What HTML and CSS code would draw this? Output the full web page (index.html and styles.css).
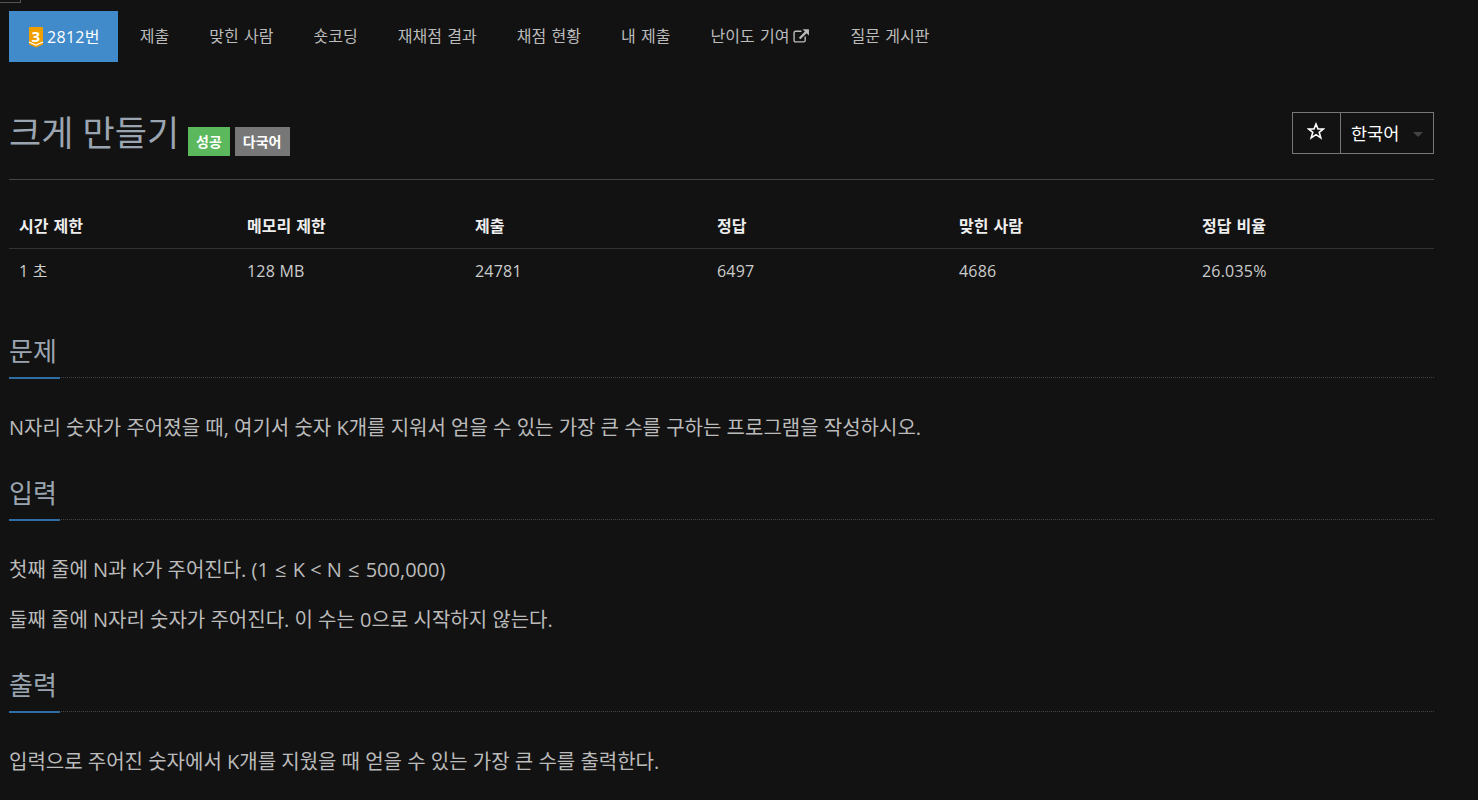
FILE: index.html
```html
<!DOCTYPE html>
<html lang="ko">
<head>
  <meta charset="UTF-8">
  <meta name="viewport" content="width=device-width, initial-scale=1.0">
  <title>2812번: 크게 만들기</title>
  <link rel="stylesheet" href="styles.css">
</head>
<body>
  <div class="corner"></div>

  <ul class="tabs">
    <li class="active">
      <svg class="tier" width="16" height="24" viewBox="0 0 16 24">
        <path d="M1 2H15V19.500L8 22.500L1 19.500Z" fill="#f09e00"/>
        <path d="M1 17L8 20L15 17" fill="none" stroke="#fff" stroke-width="1.200"/>
        <text x="8" y="16.500" text-anchor="middle" class="tier-num">3</text>
      </svg>
      <a href="#">2812번</a>
    </li>
    <li><a href="#">제출</a></li>
    <li><a href="#">맞힌 사람</a></li>
    <li><a href="#">숏코딩</a></li>
    <li><a href="#">재채점 결과</a></li>
    <li><a href="#">채점 현황</a></li>
    <li><a href="#">내 제출</a></li>
    <li>
      <a href="#">난이도 기여</a>
      <svg class="ext" width="17" height="15" viewBox="0 0 16 14">
        <path d="M11.500 8V11.500Q11.500 13 10 13H2.500Q1 13 1 11.500V4.500Q1 3 2.500 3H8" fill="none" stroke="currentColor" stroke-width="1.300"/>
        <path d="M5.500 9L12 2.500M9 1H15V7L12.800 4.800L7 10.500L5.500 9L11.200 3.200Z" fill="currentColor"/>
      </svg>
    </li>
    <li><a href="#">질문 게시판</a></li>
  </ul>

  <div class="title-row">
    <div class="title-left">
      <h1>크게 만들기</h1>
      <span class="label green">성공</span>
      <span class="label gray">다국어</span>
    </div>
    <div class="title-right">
      <span class="star-btn">
        <svg width="18" height="18" viewBox="0 0 18 18">
          <path d="M9 2L11 7H16.500L12.200 10.300L13.800 15.800L9 12.600L4.200 15.800L5.800 10.300L1.500 7H7Z" fill="none" stroke="currentColor" stroke-width="1.600"/>
        </svg>
      </span>
      <span class="lang-btn">한국어<i class="caret"></i></span>
    </div>
  </div>

  <table class="info">
    <thead>
      <tr>
        <th class="c1">시간 제한</th>
        <th class="c2">메모리 제한</th>
        <th class="c3">제출</th>
        <th class="c4">정답</th>
        <th class="c5">맞힌 사람</th>
        <th>정답 비율</th>
      </tr>
    </thead>
    <tbody>
      <tr>
        <td>1 초</td>
        <td>128 MB</td>
        <td>24781</td>
        <td>6497</td>
        <td>4686</td>
        <td>26.035%</td>
      </tr>
    </tbody>
  </table>

  <section>
    <div class="headline"><h2>문제</h2></div>
    <p>N자리 숫자가 주어졌을 때, 여기서 숫자 K개를 지워서 얻을 수 있는 가장 큰 수를 구하는 프로그램을 작성하시오.</p>
  </section>

  <section>
    <div class="headline"><h2>입력</h2></div>
    <p>첫째 줄에 N과 K가 주어진다. (1 <span class="le">≤</span> K &lt; N <span class="le">≤</span> 500,000)</p>
    <p>둘째 줄에 N자리 숫자가 주어진다. 이 수는 0으로 시작하지 않는다.</p>
  </section>

  <section>
    <div class="headline"><h2>출력</h2></div>
    <p>입력으로 주어진 숫자에서 K개를 지웠을 때 얻을 수 있는 가장 큰 수를 출력한다.</p>
  </section>
</body>
</html>
```

FILE: styles.css
```css
html { overflow: hidden; }
body { margin: 0; padding: 0 44px 0 9px; height: 800px; overflow: hidden; background: #121212; color: #bbb; font-family: "Open Sans", "Noto Sans CJK KR", sans-serif; font-size: 16px; line-height: 20px; }
a { color: inherit; text-decoration: none; }

.corner { position: absolute; left: 0; top: 0; width: 20px; height: 2px; border: 1px solid #555; border-top: 0; border-left: 0; }

.tabs { list-style: none; margin: 0; padding: 11px 0 0; display: flex; word-spacing: 1.200px; }
.tabs li { display: flex; align-items: center; height: 51px; padding: 0 20px 2px; box-sizing: border-box; color: #bbb; }
.tabs li.active { background: #428bca; color: #fff; padding: 0 18px 0 19px; gap: 3px; margin-right: 2px; letter-spacing: 0.300px; }
.tier { flex: none; }
.tier-num { font-family: "Open Sans", sans-serif; font-size: 15px; font-weight: 700; fill: #fff; }
.ext { margin-left: 4px; }

.title-row { display: flex; justify-content: space-between; margin-top: 50px; padding-bottom: 25px; border-bottom: 1px solid #444; height: 42px; }
.title-left { display: flex; align-items: flex-start; }
h1 { margin: 0; font-size: 35px; line-height: 42px; font-weight: 400; color: #9aa5b1; }
.label { margin-top: 15px; height: 29px; line-height: 29px; padding: 0 8px; font-size: 14px; font-weight: 700; color: #fff; }
.label.green { background: #5cb85c; margin-left: 9px; }
.label.gray { background: #777; margin-left: 5px; }

.title-right { display: flex; width: 142px; height: 42px; border: 1px solid #777; box-sizing: border-box; color: #fff; }
.star-btn { width: 48px; box-sizing: border-box; display: flex; align-items: center; justify-content: center; padding: 0 1px 4px 0; border-right: 1px solid #777; }
.lang-btn { flex: 1; padding-left: 10px; box-sizing: border-box; font-size: 17.500px; line-height: 40px; display: flex; align-items: center; gap: 14px; }
.caret { width: 0; height: 0; border: 5px solid transparent; border-top-color: #444; border-bottom: 0; margin-top: 3px; }

.info { width: 100%; border-collapse: collapse; margin-top: 24px; table-layout: fixed; }
.info th { text-align: left; color: #eee; font-weight: 700; height: 44px; padding: 0 10px; border-bottom: 1px solid #333; word-spacing: 1px; }
.info td { height: 43px; padding: 0 10px 2px; color: #ccc; letter-spacing: 0.200px; }
.c1, .c2 { width: 208px; }
.c3, .c4 { width: 222px; }
.c5 { width: 223px; }

.headline { border-bottom: 1px dotted #444; height: 44px; margin-top: 32px; }
section:first-of-type .headline { margin-top: 39px; }
h2 { display: inline-block; margin: 0; height: 44px; font-size: 26px; line-height: 36px; font-weight: 400; color: #9aa5b1; border-bottom: 2px solid #2f6ea5; width: 51px; }
section p { margin: 0; padding-top: 35px; font-size: 20px; line-height: 30px; color: #bbb; }
section p + p { padding-top: 20px; }
.le { padding: 0 1px; }
```
